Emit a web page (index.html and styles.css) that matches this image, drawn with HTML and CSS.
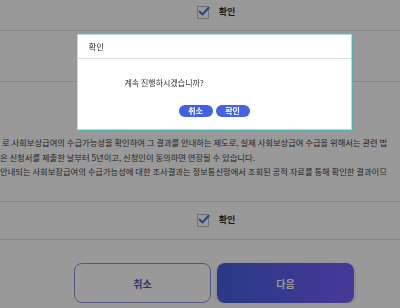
FILE: index.html
```html
<!DOCTYPE html>
<html>

<head>
    <title>수급가능성 확인</title>
    <link rel="stylesheet" href="styles.css">
</head>

<body>
    <div class="page">
        <div class="agree agree-top">
            <label class="check">
                <svg width="14" height="14" viewBox="0 0 14 14">
                    <rect x="0.5" y="1.5" width="11" height="12" fill="#fff" stroke="#b8bccc" />
                    <path d="M2.6 6.6 L5.6 9.4 L11.6 2.8" fill="none" stroke="#4766ee" stroke-width="2.1" stroke-linecap="round" stroke-linejoin="round" />
                </svg>
                <span>확인</span>
            </label>
        </div>

        <div class="info"></div>

        <div class="desc">
            <p class="line l1">로 사회보상급여의 수급가능성을 확인하여 그 결과를 안내하는 제도로, 실제 사회보상급여 수급을 위해서는 관련 법</p>
            <p class="line">은 신청서를 제출한 날부터 5년이고, 신청인이 동의하면 연장될 수 있습니다.</p>
            <p class="line">안내되는 사회보장급여의 수급가능성에 대한 조사결과는 정보통신망에서 조회된 공적 자료를 통해 확인한 결과이므</p>
        </div>

        <div class="agree agree-bottom">
            <label class="check">
                <svg width="14" height="14" viewBox="0 0 14 14">
                    <rect x="0.5" y="1.5" width="11" height="12" fill="#fff" stroke="#b8bccc" />
                    <path d="M2.6 6.6 L5.6 9.4 L11.6 2.8" fill="none" stroke="#4766ee" stroke-width="2.1" stroke-linecap="round" stroke-linejoin="round" />
                </svg>
                <span>확인</span>
            </label>
        </div>

        <div class="actions">
            <button class="btn btn-cancel">취소</button>
            <button class="btn btn-next">다음</button>
        </div>
    </div>

    <!-- confirm popup -->
    <div class="overlay">
        <div class="dialog">
            <div class="dialog-title">확인</div>
            <div class="dialog-body">
                <p class="dialog-msg">계속 진행하시겠습니까?</p>
                <div class="dialog-buttons">
                    <button class="pill">취소</button>
                    <button class="pill">확인</button>
                </div>
            </div>
        </div>
    </div>
</body>

</html>
```

FILE: styles.css
```css
body {
    font-family: "Noto Sans CJK KR", "Noto Sans", sans-serif;
    background-color: #ffffff;
    color: #3c3c3c;
    margin: 0;
    padding: 0;
    overflow: hidden;
}

.page {
    width: 428px;
}

.agree {
    display: flex;
    justify-content: center;
    border-bottom: 1px solid #dedede;
}

.agree-top {
    height: 31px;
    padding-top: 5px;
    box-sizing: border-box;
}

.agree-bottom {
    height: 38px;
    padding-top: 11px;
    box-sizing: border-box;
}

.check {
    display: flex;
    align-items: flex-start;
    gap: 8px;
    height: 14px;
    padding-left: 4px;
}

.check span {
    font-size: 9px;
    font-weight: bold;
    color: #2a2a2a;
    line-height: 14px;
}

.info {
    height: 50px;
    border-bottom: 1px solid #dedede;
}

.desc {
    width: 400px;
    height: 120px;
    padding-top: 53px;
    box-sizing: border-box;
    border-bottom: 1px solid #dedede;
    white-space: nowrap;
    overflow: hidden;
}

.line {
    margin: 0;
    font-size: 8.3px;
    line-height: 14.5px;
    color: #404040;
}

.l1 {
    padding-left: 2px;
}

.actions {
    display: flex;
    justify-content: center;
    gap: 6px;
    padding-top: 23px;
}

.btn {
    width: 137px;
    height: 40px;
    border-radius: 8px;
    font-family: inherit;
    font-size: 10px;
    font-weight: bold;
}

.btn-cancel {
    background-color: #ffffff;
    border: 1px solid #8592d8;
    color: #4a5cc0;
}

.btn-next {
    border: none;
    color: #ffffff;
    background: linear-gradient(90deg, #4461e0, #7560ff);
    box-shadow: 0 2px 4px rgba(60, 60, 140, 0.25);
}

.overlay {
    position: fixed;
    left: 0;
    top: 0;
    width: 428px;
    height: 100%;
    background-color: rgba(0, 0, 0, 0.4);
    display: flex;
    justify-content: center;
    align-items: flex-start;
    padding-top: 34px;
    box-sizing: border-box;
}

.dialog {
    width: 275px;
    height: 96px;
    background-color: #ffffff;
    border: 1px solid #a7e0df;
    box-shadow: 1px 1px 0 #58aeb0;
    box-sizing: border-box;
}

.dialog-title {
    height: 23px;
    padding-left: 11px;
    font-size: 8.5px;
    line-height: 22px;
    color: #333333;
    border-bottom: 1px solid #dcdcdc;
}

.dialog-body {
    padding-top: 17px;
}

.dialog-msg {
    margin: 0 0 0 47px;
    font-size: 8px;
    line-height: 14px;
    color: #333333;
}

.dialog-buttons {
    display: flex;
    justify-content: center;
    gap: 3px;
    margin-top: 15px;
}

.pill {
    width: 34px;
    height: 12px;
    padding: 0;
    border: none;
    border-radius: 6px;
    background-color: #4163e0;
    color: #ffffff;
    font-family: inherit;
    font-size: 8px;
    font-weight: bold;
    line-height: 12px;
}
```
